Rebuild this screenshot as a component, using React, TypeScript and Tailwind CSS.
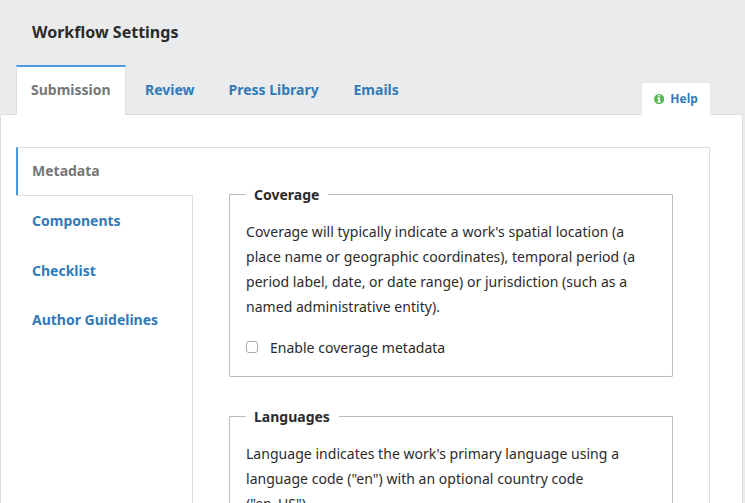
const tabs = [
  { name: "Review", cls: "ml-[19px] w-[50px]" },
  { name: "Press Library", cls: "ml-[33.5px] w-[92px]" },
  { name: "Emails", cls: "ml-[33px] w-[46.5px]" },
];

function InfoIcon() {
  return (
    <svg viewBox="128 128 1536 1536" className="size-[10.3px] fill-[#5cb85c]" aria-hidden="true">
      <path d="M1152 1376v-160q0-14-9-23t-23-9h-96v-512q0-14-9-23t-23-9h-320q-14 0-23 9t-9 23v160q0 14 9 23t23 9h96v320h-96q-14 0-23 9t-9 23v160q0 14 9 23t23 9h448q14 0 23-9t9-23zm-128-896v-160q0-14-9-23t-23-9h-192q-14 0-23 9t-9 23v160q0 14 9 23t23 9h192q14 0 23-9t9-23zm640 416q0 209-103 385.5t-279.5 279.5-385.5 103-385.5-103-279.5-279.5-103-385.5 103-385.5 279.5-279.5 385.5-103 385.5 103 279.5 279.5 103 385.5z" />
    </svg>
  );
}

function Section({ title, lines, legendClass, children }: {
  title: string;
  lines: string[];
  legendClass: string;
  children?: React.ReactNode;
}) {
  return (
    <section className="w-[444px] rounded-[2px] border border-t-0 border-[#bbb]">
      <div className="-mx-px flex h-px items-center">
        <div className="h-px w-[17px] shrink-0 rounded-tl-[2px] bg-[#bbb]" />
        <h2 className={"shrink-0 pl-2 text-sm font-bold leading-5 whitespace-nowrap " + legendClass}>{title}</h2>
        <div className="h-px grow rounded-tr-[2px] bg-[#bbb]" />
      </div>
      <div className="px-4 pt-6">
        {lines.map((line) => (
          <p key={line} className="text-sm leading-[25px] tracking-[0.035px] whitespace-nowrap">{line}</p>
        ))}
        {children}
      </div>
    </section>
  );
}

export default function App() {
  return (
    <div className="flex h-[503px] w-[745px] flex-col overflow-hidden bg-[#eaebed] font-['Noto_Sans',sans-serif] text-[#2b2b2b]">
      <header className="flex h-[65px] shrink-0 items-center pb-[2px] pl-8">
        <h1 className="text-base leading-6 font-bold">Workflow Settings</h1>
      </header>
      <nav className="relative z-10 -mb-px flex h-[50px] shrink-0 items-stretch pl-4 text-sm leading-5 font-bold text-[#337ab7]">
        <div className="flex w-[110px] items-center border-x border-t-2 border-x-[#ddd] border-t-[#4b9ae0] bg-white pb-[2px] pl-[14px] text-[#777]">
          Submission
        </div>
        {tabs.map((tab) => (
          <a key={tab.name} className={"flex items-center whitespace-nowrap " + tab.cls}>{tab.name}</a>
        ))}
        <a className="mt-[18px] mr-[35px] ml-auto flex w-[68px] items-center gap-[6px] rounded-t-[2px] bg-white pl-3 text-xs">
          <InfoIcon />
          Help
        </a>
      </nav>
      <main className="w-[743px] grow rounded-t-[2px] border border-b-0 border-[#ddd] bg-white pt-8 pl-[15px]">
        <div className="flex h-[356px] w-[694px] border-t border-r border-[#ddd]">
          <aside className="flex w-[177px] shrink-0 flex-col text-sm leading-5 font-bold text-[#337ab7]">
            <div className="-mt-px flex h-[48px] shrink-0 items-center border-t border-l-2 border-t-[#ddd] border-l-[#4b9ae0] pb-[2px] pl-[14px] text-[#777]">
              Metadata
            </div>
            <div className="flex grow flex-col border-t border-r border-[#ddd] pt-[15px] pl-4">
              <a className="h-[50px]">Components</a>
              <a className="h-[49px]">Checklist</a>
              <a className="h-5">Author Guidelines</a>
            </div>
          </aside>
          <div className="pt-[46px] pl-9">
            <Section
              title="Coverage"
              legendClass="w-[82px]"
              lines={[
                "Coverage will typically indicate a work's spatial location (a",
                "place name or geographic coordinates), temporal period (a",
                "period label, date, or date range) or jurisdiction (such as a",
                "named administrative entity).",
              ]}
            >
              <label className="flex h-[57px] items-center text-sm leading-5">
                <input type="checkbox" className="mb-[2px] size-3 appearance-none rounded-[3px] border border-[#aaa] bg-white" />
                <span className="pl-3 tracking-[0.02px]">Enable coverage metadata</span>
              </label>
            </Section>
            <div className="h-[39px]" />
            <Section
              title="Languages"
              legendClass="w-[93px]"
              lines={[
                "Language indicates the work's primary language using a",
                "language code (\"en\") with an optional country code",
                "(\"en_US\").",
              ]}
            />
          </div>
        </div>
      </main>
    </div>
  );
}
